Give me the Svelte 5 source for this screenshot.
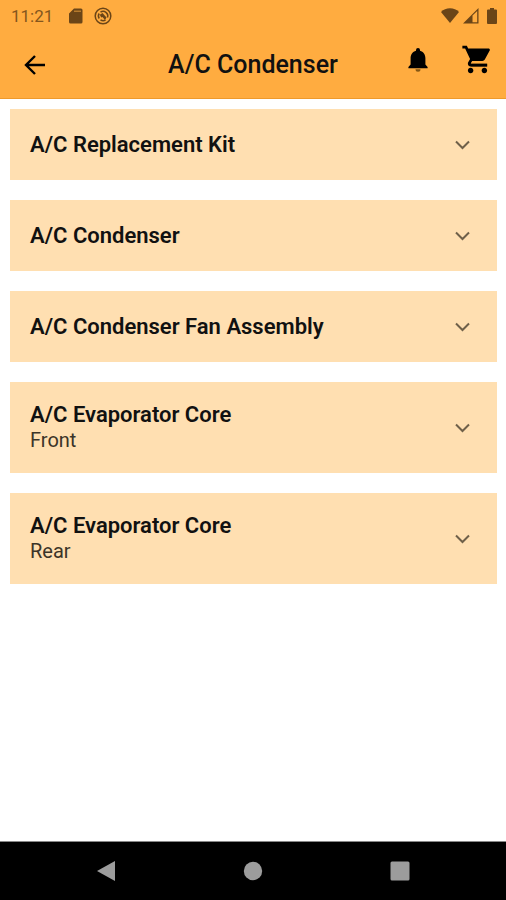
<script>
    let title = "A/C Condenser";

    let groups = $state([
        { name: "A/C Replacement Kit", open: false },
        { name: "A/C Condenser", open: false },
        { name: "A/C Condenser Fan Assembly", open: false },
        { name: "A/C Evaporator Core", position: "Front", open: false },
        { name: "A/C Evaporator Core", position: "Rear", open: false },
    ]);
</script>

<svelte:head>
    <title>{title}</title>
</svelte:head>

<div class="screen">
    <header>
        <div class="status">
            <span class="clock">11:21</span>
            <svg class="sd" width="14" height="16" viewBox="0 0 14 16">
                <path d="M5 0.5h7A1.500 1.500 0 0 1 13.500 2v12a1.500 1.500 0 0 1-1.500 1.500H1.500A1.500 1.500 0 0 1 0 14V5.500z" />
                <path class="slot" d="M5 2.500h7v1.500H5z" />
            </svg>
            <svg width="18" height="18" viewBox="0 0 18 18">
                <circle class="line" cx="9" cy="9" r="7.800" />
                <path class="line" d="M5.200 11.500a4.500 4.500 0 0 1 0-5M6.500 5.200a4.600 4.600 0 0 1 7 5.300M6.500 12.800a4.600 4.600 0 0 0 5 .2" />
                <path d="M5.800 7.800L8.500 6l4 4.500-1.500 2.500-2.500-3-1.300.5z" />
            </svg>
            <svg class="wifi" width="18" height="15" viewBox="0 0 18 15">
                <path d="M9 15L0 4C2.400 1.600 5.500.3 9 .3s6.600 1.300 9 3.700z" />
            </svg>
            <svg width="16" height="16" viewBox="0 0 16 16">
                <path fill-rule="evenodd" d="M0 15.500L15.500 0v15.500zM9.500 7.500v6.700h4.700V3z" />
            </svg>
            <svg class="battery" width="10" height="16" viewBox="0 0 10 16">
                <path d="M3 0h4v1.500h2a1 1 0 0 1 1 1V15a1 1 0 0 1-1 1H1a1 1 0 0 1-1-1V2.500a1 1 0 0 1 1-1h2z" />
            </svg>
        </div>
        <div class="toolbar">
            <button class="icon back" aria-label="Back">
                <svg width="22" height="22" viewBox="0 0 22 22">
                    <path class="arrow" d="M11 2L2 11l9 9M2 11h19" />
                </svg>
            </button>
            <h1>{title}</h1>
            <div class="actions">
                <button class="icon" aria-label="Notifications">
                    <svg width="20" height="26" viewBox="0 0 20 26">
                        <path d="M10 1a2 2 0 0 1 2 2v.7c3.400.9 5.400 3.900 5.400 7.600v6.200l2.200 2.400v1.400H.4v-1.400l2.200-2.400v-6.200C2.600 7.600 4.600 4.600 8 3.700V3a2 2 0 0 1 2-2z" />
                        <path class="clapper" d="M7.500 22.300h5a2.500 2.500 0 0 1-5 0z" />
                    </svg>
                </button>
                <button class="icon" aria-label="Cart">
                    <svg width="33" height="33" viewBox="0 0 24 24">
                        <path class="tray" d="M7.420 15H19v2H7z" />
                        <path d="M7 18c-1.100 0-1.990.9-1.990 2S5.900 22 7 22s2-.9 2-2-.9-2-2-2zM1 2v2h2l3.600 7.590-1.350 2.450c-.16.28-.25.61-.25.96 0 1.100.9 2 2 2h12v-2H7.420c-.14 0-.25-.11-.25-.25l.03-.12.9-1.630h7.450c.75 0 1.410-.41 1.750-1.030l3.580-6.490c.08-.14.12-.31.12-.48 0-.55-.45-1-1-1H5.210l-.94-2H1zm16 16c-1.100 0-1.990.9-1.990 2s.89 2 1.990 2 2-.9 2-2-.9-2-2-2z" />
                    </svg>
                </button>
            </div>
        </div>
    </header>

    <main>
        {#each groups as group}
            <button class="card" aria-expanded={group.open} onclick={() => (group.open = !group.open)}>
                <span class="text">
                    <span class="name">{group.name}</span>
                    {#if group.position}
                        <span class="position">{group.position}</span>
                    {/if}
                </span>
                <svg class:flipped={group.open} width="28" height="28" viewBox="0 0 28 28">
                    <path d="M7 10.500L13.500 17l6.500-6.500" />
                </svg>
            </button>
        {/each}
    </main>

    <nav>
        <button aria-label="System back">
            <svg width="20" height="20" viewBox="0 0 20 20"><path d="M1 10L19 0v20z" /></svg>
        </button>
        <button aria-label="Home">
            <svg width="20" height="20" viewBox="0 0 20 20"><circle cx="10" cy="10" r="9.200" /></svg>
        </button>
        <button aria-label="Recent apps">
            <svg width="20" height="20" viewBox="0 0 20 20"><rect x="0.500" y="0.500" width="19" height="19" rx="1.500" /></svg>
        </button>
    </nav>
</div>

<style>
    :global(body) {
        background: #fff;
    }
    .screen {
        display: flex;
        flex-direction: column;
        min-height: 100vh;
        font-family: Roboto, "Liberation Sans", sans-serif;
        color: #111;
    }
    button {
        padding: 0;
        border: 0;
        background: none;
        color: inherit;
        font: inherit;
        cursor: pointer;
    }
    svg {
        display: block;
        flex: none;
    }
    header {
        background: #ffac40;
        border-bottom: 1px solid #ee9a2c;
    }
    .status {
        display: flex;
        align-items: center;
        gap: 4px;
        height: 31px;
        padding: 0 9px 0 11px;
        color: #84561d;
        fill: #6b4517;
    }
    .clock {
        font-size: 17px;
    }
    .sd {
        margin: 0 7px 0 12px;
    }
    .slot {
        fill: #b57a2d;
    }
    .line {
        fill: none;
        stroke: #6b4517;
        stroke-width: 1.5;
    }
    .wifi {
        margin-left: auto;
    }
    .battery {
        margin-left: 4px;
    }
    .toolbar {
        display: grid;
        grid-template-columns: 1fr auto 1fr;
        align-items: center;
        height: 67px;
        padding: 0 12px;
    }
    .icon {
        justify-self: start;
    }
    .back {
        padding: 0 12px;
    }
    .arrow {
        fill: none;
        stroke: #000;
        stroke-width: 2.4;
    }
    h1 {
        margin: 0;
        font-size: 25px;
        font-weight: 500;
        line-height: 31px;
    }
    .actions {
        display: flex;
        align-items: center;
        justify-content: flex-end;
        gap: 33px;
        padding-bottom: 10px;
    }
    .clapper {
        fill: #855714;
    }
    .tray {
        fill: #4a2f0a;
    }
    main {
        display: flex;
        flex: 1;
        flex-direction: column;
        gap: 20px;
        padding: 10px 9px 20px 10px;
    }
    .card {
        display: flex;
        align-items: center;
        justify-content: space-between;
        box-sizing: border-box;
        min-height: 71px;
        padding: 20px;
        background: #ffdfb1;
        text-align: left;
    }
    .text {
        display: flex;
        flex-direction: column;
    }
    .name {
        font-size: 22px;
        font-weight: 600;
        line-height: 26px;
    }
    .position {
        color: #3c3428;
        font-size: 20px;
        line-height: 25px;
    }
    .card svg {
        fill: none;
        stroke: #6f6049;
        stroke-width: 2;
    }
    .flipped {
        transform: rotate(180deg);
    }
    nav {
        display: grid;
        grid-template-columns: repeat(3, 1fr);
        height: 58px;
        padding: 0 33px;
        border-top: 1px solid #888;
        background: #000;
        fill: #9c9c9c;
    }
    nav button {
        display: flex;
        align-items: center;
        justify-content: center;
    }
</style>
